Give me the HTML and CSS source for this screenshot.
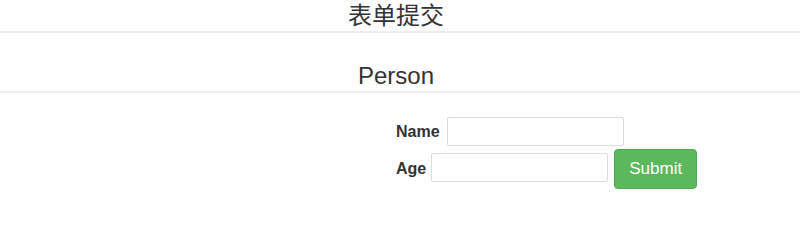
FILE: index.html
```html
<!DOCTYPE html>
<html lang="zh">
<head>
<meta charset="utf-8">
<title>表单提交</title>
<link rel="stylesheet" href="styles.css">
</head>
<body>
  <h2 class="page-title">表单提交</h2>
  <h3 class="section-title">Person</h3>
  <form class="person-form">
    <div class="form-row form-row-name">
      <label class="field-label" for="name">Name</label>
      <input class="field-input" id="name" type="text">
    </div>
    <div class="form-row">
      <label class="field-label" for="age">Age</label>
      <input class="field-input field-input-raised" id="age" type="text">
      <button class="btn-submit" type="submit">Submit</button>
    </div>
  </form>
</body>
</html>
```

FILE: styles.css
```css
html, body {
  margin: 0;
  padding: 0;
  background: #fff;
}

body {
  font-family: "Liberation Sans", "Noto Sans CJK SC", Arial, sans-serif;
  color: #333;
}

.page-title {
  margin: 0;
  padding-right: 8px;
  font-size: 24px;
  font-weight: normal;
  line-height: 31px;
  height: 31px;
  text-align: center;
  border-bottom: 2px solid #eee;
}

.section-title {
  margin: 0;
  padding-top: 28px;
  padding-right: 8px;
  font-size: 24px;
  font-weight: normal;
  line-height: 30px;
  height: 30px;
  text-align: center;
  border-bottom: 2px solid #eee;
}

.person-form {
  margin: 24px 0 0 396px;
  display: flex;
  flex-direction: column;
  gap: 3px;
}

.form-row {
  display: flex;
  align-items: center;
  gap: 5px;
}

.form-row-name {
  gap: 7px;
}

.field-label {
  font-size: 16px;
  font-weight: bold;
}

.field-input {
  box-sizing: border-box;
  width: 177px;
  height: 29px;
  margin: 0;
  border: 1px solid #dcdcdc;
  border-radius: 2px;
  background: #fff;
  font-size: 14px;
  padding: 4px 6px;
}

.field-input-raised {
  margin-bottom: 4px;
}

.btn-submit {
  box-sizing: border-box;
  margin-left: 1px;
  width: 83px;
  height: 40px;
  border: 1px solid #4cae4c;
  border-radius: 4px;
  background: #5cb85c;
  color: #fff;
  font-family: "Liberation Sans", Arial, sans-serif;
  font-size: 17px;
  padding: 0;
}
```
